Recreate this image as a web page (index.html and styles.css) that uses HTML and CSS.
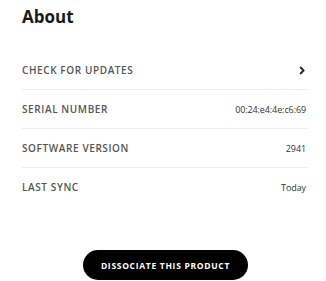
FILE: index.html
```html
<!DOCTYPE html>
<html>
<head>
<meta charset="utf-8">
<link rel="stylesheet" href="styles.css">
</head>
<body>
<div class="page">
  <h1 class="title">About</h1>
  <ul class="list">
    <li class="row">
      <span class="label">CHECK FOR UPDATES</span>
      <svg class="chev" width="6" height="9" viewBox="0 0 6 9"><path d="M1.2 1 L4.6 4.5 L1.2 8" fill="none" stroke="#222" stroke-width="1.8"/></svg>
    </li>
    <li class="row">
      <span class="label">SERIAL NUMBER</span>
      <span class="value">00:24:e4:4e:c6:69</span>
    </li>
    <li class="row">
      <span class="label">SOFTWARE VERSION</span>
      <span class="value">2941</span>
    </li>
    <li class="row last">
      <span class="label">LAST SYNC</span>
      <span class="value">Today</span>
    </li>
  </ul>
  <div class="actions">
    <button class="btn">DISSOCIATE THIS PRODUCT</button>
  </div>
</div>
</body>
</html>
```
FILE: styles.css
```css
html, body {
  margin: 0;
  padding: 0;
  background: #fff;
}
body {
  font-family: "Open Sans", "Noto Sans", sans-serif;
  color: #222;
}
.page {
  padding: 5px 18px 0 22px;
}
.title {
  margin: 0;
  font-size: 17px;
  font-weight: 700;
  line-height: 23px;
  color: #1a1a1a;
}
.list {
  list-style: none;
  margin: 23px 0 0 0;
  padding: 0;
}
.row {
  display: flex;
  align-items: center;
  justify-content: space-between;
  height: 38px;
  border-bottom: 1px solid #ececec;
}
.row.last {
  border-bottom: none;
}
.label {
  font-size: 10px;
  font-weight: 600;
  color: #555;
  letter-spacing: 0.6px;
}
.value {
  font-size: 9px;
  color: #333;
  margin-right: 2px;
  letter-spacing: -0.1px;
}
.chev {
  margin-right: 3px;
}
.actions {
  display: flex;
  justify-content: center;
  margin-top: 44px;
}
.btn {
  width: 165px;
  height: 30px;
  border: none;
  border-radius: 15px;
  background: #000;
  color: #fff;
  font-family: "Open Sans", "Noto Sans", sans-serif;
  font-size: 8.5px;
  font-weight: 700;
  letter-spacing: 0.7px;
  padding: 0;
  margin-left: 1px;
}
```
